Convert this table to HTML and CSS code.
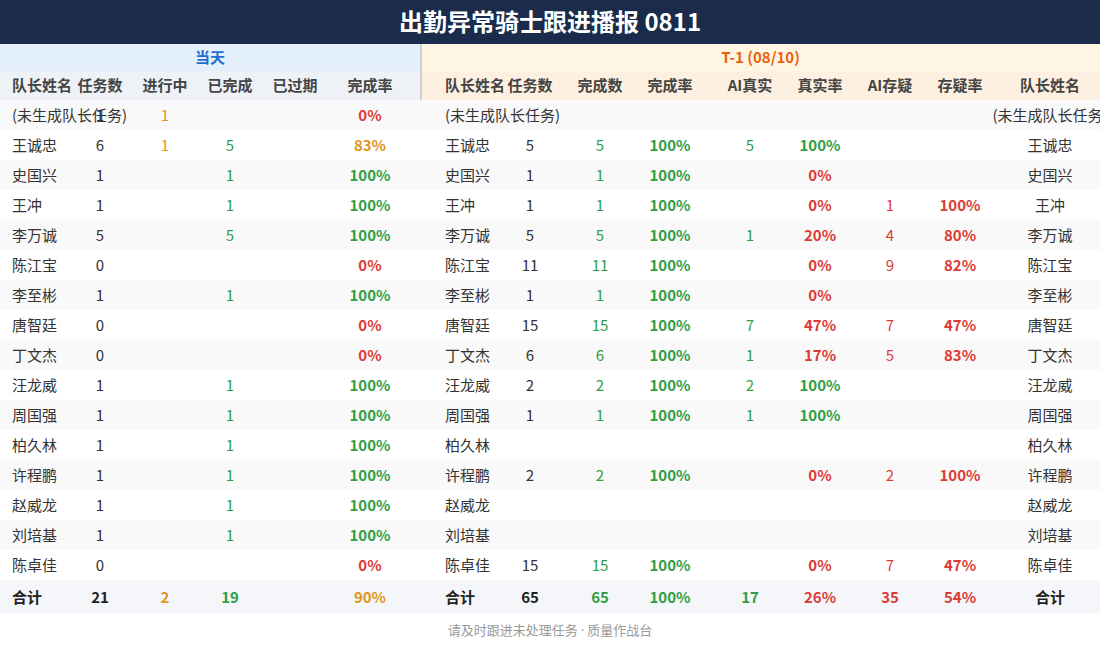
FILE: index.html
```html
<!DOCTYPE html>
<html lang="zh">
<head>
<meta charset="utf-8">
<link rel="stylesheet" href="styles.css">
</head>
<body>
<div class="page">
  <header class="title">出勤异常骑士跟进播报 0811</header>
  <table class="report">
    <colgroup>
      <col class="w70"><col class="w60"><col class="w70"><col class="w60"><col class="w70"><col class="w90">
      <col class="w75"><col class="w70"><col class="w70"><col class="w70"><col class="w90"><col class="w50"><col class="w90"><col class="w50"><col class="w130">
    </colgroup>
    <thead>
      <tr class="sec">
        <th colspan="6" class="sec-today">当天</th>
        <th colspan="9" class="sec-prev div"><span class="sec-prev-t">T-1 (08/10)</span></th>
      </tr>
      <tr class="cols">
        <th class="l name">队长姓名</th><th class="l">任务数</th><th class="l">进行中</th><th class="l">已完成</th><th class="l">已过期</th><th class="l rate-l">完成率</th>
        <th class="r name2 div">队长姓名</th><th class="r">任务数</th><th class="r">完成数</th><th class="r">完成率</th><th class="r">AI真实</th><th class="r">真实率</th><th class="r">AI存疑</th><th class="r">存疑率</th><th class="r">队长姓名</th>
      </tr>
    </thead>
    <tbody>
      <tr><td class="name">(未生成队长任务)</td><td>1</td><td class="o">1</td><td></td><td></td><td class="rate-l b red">0%</td>
        <td class="name2">(未生成队长任务)</td><td></td><td></td><td></td><td></td><td></td><td></td><td></td><td>(未生成队长任务)</td></tr>
      <tr><td class="name">王诚忠</td><td>6</td><td class="o">1</td><td class="g">5</td><td></td><td class="rate-l b o">83%</td>
        <td class="name2">王诚忠</td><td>5</td><td class="g">5</td><td class="b g">100%</td><td class="g">5</td><td class="b g">100%</td><td></td><td></td><td>王诚忠</td></tr>
      <tr><td class="name">史国兴</td><td>1</td><td></td><td class="g">1</td><td></td><td class="rate-l b g">100%</td>
        <td class="name2">史国兴</td><td>1</td><td class="g">1</td><td class="b g">100%</td><td></td><td class="b red">0%</td><td></td><td></td><td>史国兴</td></tr>
      <tr><td class="name">王冲</td><td>1</td><td></td><td class="g">1</td><td></td><td class="rate-l b g">100%</td>
        <td class="name2">王冲</td><td>1</td><td class="g">1</td><td class="b g">100%</td><td></td><td class="b red">0%</td><td class="red">1</td><td class="b red">100%</td><td>王冲</td></tr>
      <tr><td class="name">李万诚</td><td>5</td><td></td><td class="g">5</td><td></td><td class="rate-l b g">100%</td>
        <td class="name2">李万诚</td><td>5</td><td class="g">5</td><td class="b g">100%</td><td class="g">1</td><td class="b red">20%</td><td class="red">4</td><td class="b red">80%</td><td>李万诚</td></tr>
      <tr><td class="name">陈江宝</td><td>0</td><td></td><td></td><td></td><td class="rate-l b red">0%</td>
        <td class="name2">陈江宝</td><td>11</td><td class="g">11</td><td class="b g">100%</td><td></td><td class="b red">0%</td><td class="red">9</td><td class="b red">82%</td><td>陈江宝</td></tr>
      <tr><td class="name">李至彬</td><td>1</td><td></td><td class="g">1</td><td></td><td class="rate-l b g">100%</td>
        <td class="name2">李至彬</td><td>1</td><td class="g">1</td><td class="b g">100%</td><td></td><td class="b red">0%</td><td></td><td></td><td>李至彬</td></tr>
      <tr><td class="name">唐智廷</td><td>0</td><td></td><td></td><td></td><td class="rate-l b red">0%</td>
        <td class="name2">唐智廷</td><td>15</td><td class="g">15</td><td class="b g">100%</td><td class="g">7</td><td class="b red">47%</td><td class="red">7</td><td class="b red">47%</td><td>唐智廷</td></tr>
      <tr><td class="name">丁文杰</td><td>0</td><td></td><td></td><td></td><td class="rate-l b red">0%</td>
        <td class="name2">丁文杰</td><td>6</td><td class="g">6</td><td class="b g">100%</td><td class="g">1</td><td class="b red">17%</td><td class="red">5</td><td class="b red">83%</td><td>丁文杰</td></tr>
      <tr><td class="name">汪龙威</td><td>1</td><td></td><td class="g">1</td><td></td><td class="rate-l b g">100%</td>
        <td class="name2">汪龙威</td><td>2</td><td class="g">2</td><td class="b g">100%</td><td class="g">2</td><td class="b g">100%</td><td></td><td></td><td>汪龙威</td></tr>
      <tr><td class="name">周国强</td><td>1</td><td></td><td class="g">1</td><td></td><td class="rate-l b g">100%</td>
        <td class="name2">周国强</td><td>1</td><td class="g">1</td><td class="b g">100%</td><td class="g">1</td><td class="b g">100%</td><td></td><td></td><td>周国强</td></tr>
      <tr><td class="name">柏久林</td><td>1</td><td></td><td class="g">1</td><td></td><td class="rate-l b g">100%</td>
        <td class="name2">柏久林</td><td></td><td></td><td></td><td></td><td></td><td></td><td></td><td>柏久林</td></tr>
      <tr><td class="name">许程鹏</td><td>1</td><td></td><td class="g">1</td><td></td><td class="rate-l b g">100%</td>
        <td class="name2">许程鹏</td><td>2</td><td class="g">2</td><td class="b g">100%</td><td></td><td class="b red">0%</td><td class="red">2</td><td class="b red">100%</td><td>许程鹏</td></tr>
      <tr><td class="name">赵威龙</td><td>1</td><td></td><td class="g">1</td><td></td><td class="rate-l b g">100%</td>
        <td class="name2">赵威龙</td><td></td><td></td><td></td><td></td><td></td><td></td><td></td><td>赵威龙</td></tr>
      <tr><td class="name">刘培基</td><td>1</td><td></td><td class="g">1</td><td></td><td class="rate-l b g">100%</td>
        <td class="name2">刘培基</td><td></td><td></td><td></td><td></td><td></td><td></td><td></td><td>刘培基</td></tr>
      <tr><td class="name">陈卓佳</td><td>0</td><td></td><td></td><td></td><td class="rate-l b red">0%</td>
        <td class="name2">陈卓佳</td><td>15</td><td class="g">15</td><td class="b g">100%</td><td></td><td class="b red">0%</td><td class="red">7</td><td class="b red">47%</td><td>陈卓佳</td></tr>
    </tbody>
    <tfoot>
      <tr><td class="name">合计</td><td>21</td><td class="o">2</td><td class="g">19</td><td></td><td class="rate-l o">90%</td>
        <td class="name2">合计</td><td>65</td><td class="g">65</td><td class="g">100%</td><td class="g">17</td><td class="red">26%</td><td class="red">35</td><td class="red">54%</td><td>合计</td></tr>
    </tfoot>
  </table>
  <footer class="foot">请及时跟进未处理任务 <span class="dot">·</span> 质量作战台</footer>
</div>
</body>
</html>
```

FILE: styles.css
```css
html, body {
  margin: 0;
  padding: 0;
  background: #ffffff;
}
body {
  font-family: "Noto Sans CJK SC", "Noto Sans", sans-serif;
  color: #333333;
  overflow: hidden;
}
.page {
  width: 1100px;
  overflow: hidden;
}
.title {
  height: 44px;
  line-height: 42px;
  background: #1a2b4b;
  color: #ffffff;
  font-size: 24px;
  font-weight: 700;
  text-align: center;
}
.report {
  width: 1115px;
  table-layout: fixed;
  border-collapse: separate;
  border-spacing: 0;
  font-size: 15px;
  line-height: 20px;
}
.w50 { width: 50px; }
.w60 { width: 60px; }
.w70 { width: 70px; }
.w75 { width: 75px; }
.w90 { width: 90px; }
.w130 { width: 130px; }
.report th, .report td {
  padding: 0;
  text-align: center;
  vertical-align: middle;
  white-space: nowrap;
  overflow: visible;
}
.sec { height: 27px; }
.sec th {
  padding-bottom: 2px;
  font-size: 15px;
  font-weight: 700;
}
.sec-today {
  background: #e3f0fc;
  color: #1e6fd0;
}
.sec-prev {
  background: #fef5e2;
  color: #e8620e;
}
.sec-prev-t {
  padding-right: 14px;
}
.cols { height: 29px; }
.cols th {
  padding-bottom: 2px;
  color: #444444;
  font-weight: 700;
}
.cols th.l { background: #eef1f6; }
.cols th.r { background: #fdf0e1; }
.div {
  box-shadow: inset 2px 0 0 #cfcfcf;
}
.report .name {
  text-align: left;
  padding-left: 12px;
}
.report .name2 {
  text-align: left;
  padding-left: 25px;
}
.report .rate-l {
  padding-right: 10px;
}
tbody tr { height: 30px; }
tbody td {
  padding-bottom: 4px;
  color: #333333;
}
tbody tr:nth-child(odd) td { background: #f9f9f9; }
tbody tr:nth-child(even) td { background: #ffffff; }
tfoot tr { height: 34px; }
tfoot td {
  padding-bottom: 3px;
  background: #f4f6fa;
  font-weight: 700;
  color: #222222;
}
.report .g { color: #2f9e44; }
.report .red { color: #dc3b35; }
.report .o { color: #e0961b; }
.report .b { font-weight: 700; }
.foot {
  height: 32px;
  line-height: 32px;
  text-align: center;
  font-size: 13px;
  color: #999999;
}
.dot {
  font-family: "Noto Sans", sans-serif;
}
```
